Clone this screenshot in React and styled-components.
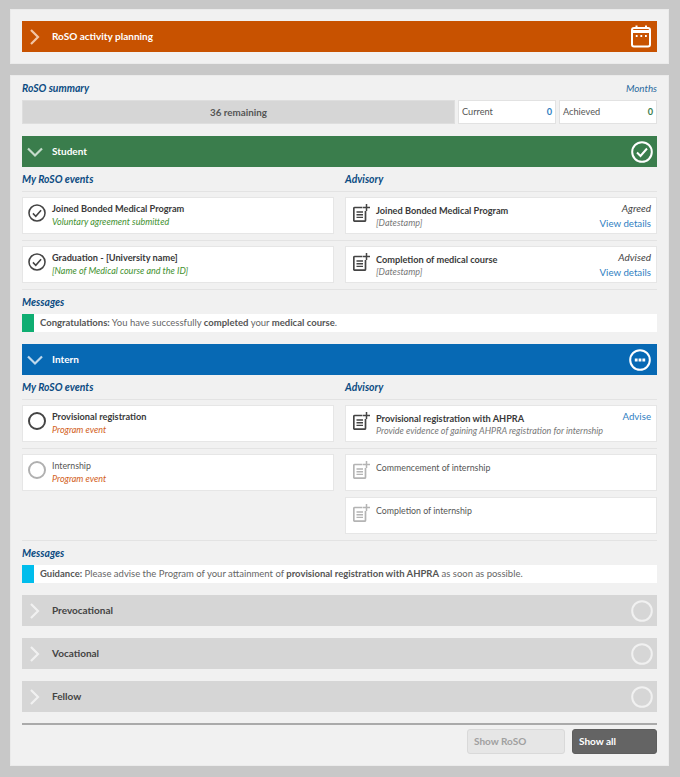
import React from "react"
import styled, { createGlobalStyle } from "styled-components"

const Global = createGlobalStyle`
  html, body {
    margin: 0;
    background: #c8c8c8;
  }
  body {
    font-family: "Lato", "Open Sans", sans-serif;
    font-size: 9.5px;
    color: #444;
  }
`

const Page = styled.div`
  width: 680px;
  height: 777px;
  box-sizing: border-box;
  padding: 9px 11px 0 10px;
  display: flex;
  flex-direction: column;
  gap: 11px;
`

const Panel = styled.section`
  background: #f1f1f1;
  box-shadow: inset 0 0 0 1px #ebebeb;
  padding: ${p => (p.$top ? "12px" : "0 12px 12px")};
`

const Bar = styled.div`
  height: 31px;
  box-sizing: border-box;
  display: flex;
  align-items: center;
  padding: 0 4px 0 5px;
  background: ${p => p.$bg};
  color: ${p => p.$text || "#fff"};
  font-weight: 700;
  font-size: 10px;
  margin-bottom: ${p => (p.$last ? "0" : "12px")};
`

const ChevronBox = styled.span`
  width: 25px;
  display: flex;
  justify-content: flex-start;
`

const BarLabel = styled.span`
  flex: 1;
  padding-bottom: 2px;
`

const Heading = styled.div`
  height: ${p => (p.$tall ? "25px" : "24px")};
  display: flex;
  align-items: center;
  justify-content: space-between;
  font-weight: 700;
  font-style: italic;
  font-size: 10.4px;
  color: #0b4b82;
`

const MonthsLink = styled.a`
  font-weight: 400;
  font-size: 9.8px;
  color: #2a6a9e;
`

const Summary = styled.div`
  display: grid;
  grid-template-columns: 1fr 98px 98px;
  gap: 3px;
  height: 24px;
  margin-bottom: 12px;
`

const Remaining = styled.div`
  background: #d6d6d6;
  box-shadow: inset 0 0 0 1px #dedede;
  display: flex;
  align-items: center;
  justify-content: center;
  padding-bottom: 1px;
  font-size: 9.8px;
  font-weight: 700;
  color: #555;
`

const Stat = styled.div`
  background: #fff;
  border: 1px solid #e2e2e2;
  box-sizing: border-box;
  display: flex;
  align-items: center;
  justify-content: space-between;
  padding: 0 3px 1px;
  font-size: 9.2px;
  color: #555;
`

const StatValue = styled.b`
  color: ${p => p.$color};
  font-weight: 700;
`

const ColumnHeads = styled.div`
  display: grid;
  grid-template-columns: 1fr 1fr;
  gap: 11px;
  border-bottom: 1px solid #e3e3e3;
`

const Row = styled.div`
  display: grid;
  grid-template-columns: 1fr 1fr;
  gap: 11px;
  padding: 5px 0 6px;
  border-bottom: 1px solid #e3e3e3;
`

const Stack = styled.div`
  display: flex;
  flex-direction: column;
  gap: 6px;
`

const Card = styled.div`
  height: 37px;
  box-sizing: border-box;
  background: #fff;
  border: 1px solid #e6e6e6;
  display: flex;
  align-items: flex-start;
  padding: ${p => (p.$advisory ? "6px 5px 0 7px" : "4px 5px 0 5px")};
`

const IconSlot = styled.span`
  width: ${p => (p.$advisory ? "23px" : "24px")};
  flex: none;
  display: flex;
  padding-top: ${p => (p.$advisory ? "0" : "2px")};
`

const CardBody = styled.div`
  flex: 1;
  min-width: 0;
`

const CardTitle = styled.div`
  font-weight: ${p => (p.$muted ? 400 : 700)};
  color: ${p => (p.$muted ? "#555" : "#3a3a3a")};
  line-height: 13px;
  font-size: ${p => (p.$muted ? "8.8px" : "9.2px")};
`

const CardSub = styled.div`
  font-style: italic;
  line-height: ${p => (p.$tight ? "12px" : "13px")};
  font-size: 9px;
  color: ${p => p.$color};
  white-space: nowrap;
`

const CardSide = styled.div`
  display: flex;
  flex-direction: column;
  align-items: flex-end;
  margin-top: -3px;
  line-height: 15px;
`

const CardState = styled.span`
  font-style: italic;
  font-size: 10px;
  color: #444;
`

const CardLink = styled.a`
  font-size: 9.7px;
  color: #2f80c2;
`

const Message = styled.div`
  height: 18px;
  background: #fff;
  display: flex;
  align-items: center;
  margin-bottom: 12px;
  color: #666;
  font-size: 9.5px;

  b {
    color: #555;
    font-weight: 700;
  }
`

const MessageText = styled.span`
  padding-bottom: 1px;
`

const Swatch = styled.span`
  width: 12px;
  align-self: stretch;
  background: ${p => p.$color};
  margin-right: 6px;
`

const Footer = styled.div`
  margin-top: 11px;
  border-top: 2px solid #aaa;
  padding-top: 4px;
  display: flex;
  justify-content: flex-end;
  gap: 7px;
`

const Button = styled.button`
  height: 25px;
  box-sizing: border-box;
  width: ${p => (p.$primary ? "85px" : "98px")};
  text-align: left;
  padding: 0 6px 2px;
  border-radius: 3px;
  font-family: inherit;
  font-size: 10px;
  font-weight: 700;
  border: 1px solid ${p => (p.$primary ? "#5e5e5e" : "#d9d9d9")};
  background: ${p => (p.$primary ? "#646464" : "#e6e6e6")};
  color: ${p => (p.$primary ? "#fff" : "#a0a0a0")};
`

const BarIconNudge = styled.span`
  display: flex;
  margin-right: ${p => p.$right}px;
`

const Chevron = ({ down, color }) => (
  <svg width="16" height="16" viewBox="0 0 16 16" fill="none" stroke={color} strokeWidth="2.2">
    <path d={down ? "M1 4.5l7 7 7-7" : "M4 1l7 7-7 7"} />
  </svg>
)

const CalendarIcon = () => (
  <svg width="20" height="23" viewBox="0 0 20 23" fill="none" stroke="#fff">
    <rect x="1" y="3" width="18" height="18.5" rx="2" strokeWidth="2" />
    <path d="M1 6.5h18" strokeWidth="3" />
    <path d="M5.5 0.5v3M15 0.5v3" strokeWidth="2" />
    <path d="M4.8 11h1.8M9.4 11h1.8M14 11h1.8" strokeWidth="1.8" />
  </svg>
)

const StatusIcon = ({ size = 22, color = "#fff", width = 2, kind }) => (
  <svg width={size} height={size} viewBox="0 0 22 22" fill="none" stroke={color} strokeWidth={width}>
    <circle cx="11" cy="11" r="9.8" />
    {kind === "check" && <path d="M6 11.5l3.5 3.5L16 7.5" />}
    {kind === "more" && (
      <path d="M5.8 11h2.8M9.6 11h2.8M13.4 11h2.8" strokeWidth="3" />
    )}
  </svg>
)

const NoteIcon = ({ color }) => (
  <svg width="18" height="18" viewBox="0 0 18 18" fill="none" stroke={color}>
    <path d="M9.5 3.5H1.8a1 1 0 0 0-1 1v11.7a1 1 0 0 0 1 1h9.7a1 1 0 0 0 1-1V7" strokeWidth="1.7" />
    <path d="M3.5 8h6.5M3.5 10.7h6.5M3.5 13.4h6.5" strokeWidth="1.4" />
    <path d="M13.5 0v7M10 3.5h7" strokeWidth="1.5" />
  </svg>
)

const EventCard = ({ title, sub, subColor, state, muted }) => (
  <Card>
    <IconSlot>
      <StatusIcon size={18} color={muted ? "#b0b0b0" : "#444"} width={state === "done" ? 1.9 : 2.4} kind={state === "done" ? "check" : null} />
    </IconSlot>
    <CardBody>
      <CardTitle $muted={muted}>{title}</CardTitle>
      <CardSub $color={subColor}>{sub}</CardSub>
    </CardBody>
  </Card>
)

const AdvisoryCard = ({ title, sub, state, link, muted }) => (
  <Card $advisory>
    <IconSlot $advisory>
      <NoteIcon color={muted ? "#b4b4b4" : "#444"} />
    </IconSlot>
    <CardBody>
      <CardTitle $muted={muted}>{title}</CardTitle>
      {sub && <CardSub $tight $color="#777">{sub}</CardSub>}
    </CardBody>
    {(state || link) && (
      <CardSide>
        {state && <CardState>{state}</CardState>}
        {link && <CardLink>{link}</CardLink>}
      </CardSide>
    )}
  </Card>
)

const Columns = () => (
  <ColumnHeads>
    <Heading>My RoSO events</Heading>
    <Heading>Advisory</Heading>
  </ColumnHeads>
)

const PhaseBar = ({ label, bg, children, text, down, chevron = "#fff", last }) => (
  <Bar $bg={bg} $text={text} $last={last}>
    <ChevronBox>
      <Chevron down={down} color={chevron} />
    </ChevronBox>
    <BarLabel>{label}</BarLabel>
    {children}
  </Bar>
)

const GREEN = "#3f9130"
const ORANGE = "#d2601a"

export default function App() {
  return (
    <>
      <Global />
      <Page>
        <Panel $top>
          <PhaseBar label="RoSO activity planning" bg="#c85200" chevron="#f2c6a6" last>
            <BarIconNudge $right={2}>
              <CalendarIcon />
            </BarIconNudge>
          </PhaseBar>
        </Panel>
        <Panel>
          <Heading $tall>
            RoSO summary
            <MonthsLink>Months</MonthsLink>
          </Heading>
          <Summary>
            <Remaining>36 remaining</Remaining>
            <Stat>Current<StatValue $color="#2f80c2">0</StatValue></Stat>
            <Stat>Achieved<StatValue $color="#3a7d4c">0</StatValue></Stat>
          </Summary>

          <PhaseBar label="Student" bg="#3a7d4c" down chevron="#c5dccb" last>
            <StatusIcon kind="check" />
          </PhaseBar>
          <Columns />
          <Row>
            <EventCard title="Joined Bonded Medical Program" sub="Voluntary agreement submitted" subColor={GREEN} state="done" />
            <AdvisoryCard title="Joined Bonded Medical Program" sub="[Datestamp]" state="Agreed" link="View details" />
          </Row>
          <Row>
            <EventCard title="Graduation - [University name]" sub="[Name of Medical course and the ID]" subColor={GREEN} state="done" />
            <AdvisoryCard title="Completion of medical course" sub="[Datestamp]" state="Advised" link="View details" />
          </Row>
          <Heading>Messages</Heading>
          <Message>
            <Swatch $color="#0fae72" />
            <MessageText><b>Congratulations:</b> You have successfully <b>completed</b> your <b>medical course</b>.</MessageText>
          </Message>

          <PhaseBar label="Intern" bg="#0769b4" down chevron="#c0d9ec" last>
            <BarIconNudge $right={2}>
              <StatusIcon kind="more" />
            </BarIconNudge>
          </PhaseBar>
          <Columns />
          <Row>
            <EventCard title="Provisional registration" sub="Program event" subColor={ORANGE} />
            <AdvisoryCard title="Provisional registration with AHPRA" sub="Provide evidence of gaining AHPRA registration for internship" link="Advise" />
          </Row>
          <Row>
            <Stack>
              <EventCard title="Internship" sub="Program event" subColor={ORANGE} muted />
            </Stack>
            <Stack>
              <AdvisoryCard title="Commencement of internship" muted />
              <AdvisoryCard title="Completion of internship" muted />
            </Stack>
          </Row>
          <Heading>Messages</Heading>
          <Message>
            <Swatch $color="#00bdec" />
            <MessageText><b>Guidance:</b> Please advise the Program of your attainment of <b>provisional registration with AHPRA</b> as soon as possible.</MessageText>
          </Message>

          {["Prevocational", "Vocational", "Fellow"].map((label, i) => (
            <PhaseBar key={label} label={label} bg="#d6d6d6" text="#444" chevron="#f1f1f1" last={i === 2}>
              <StatusIcon color="#f1f1f1" />
            </PhaseBar>
          ))}

          <Footer>
            <Button>Show RoSO</Button>
            <Button $primary>Show all</Button>
          </Footer>
        </Panel>
      </Page>
    </>
  )
}
